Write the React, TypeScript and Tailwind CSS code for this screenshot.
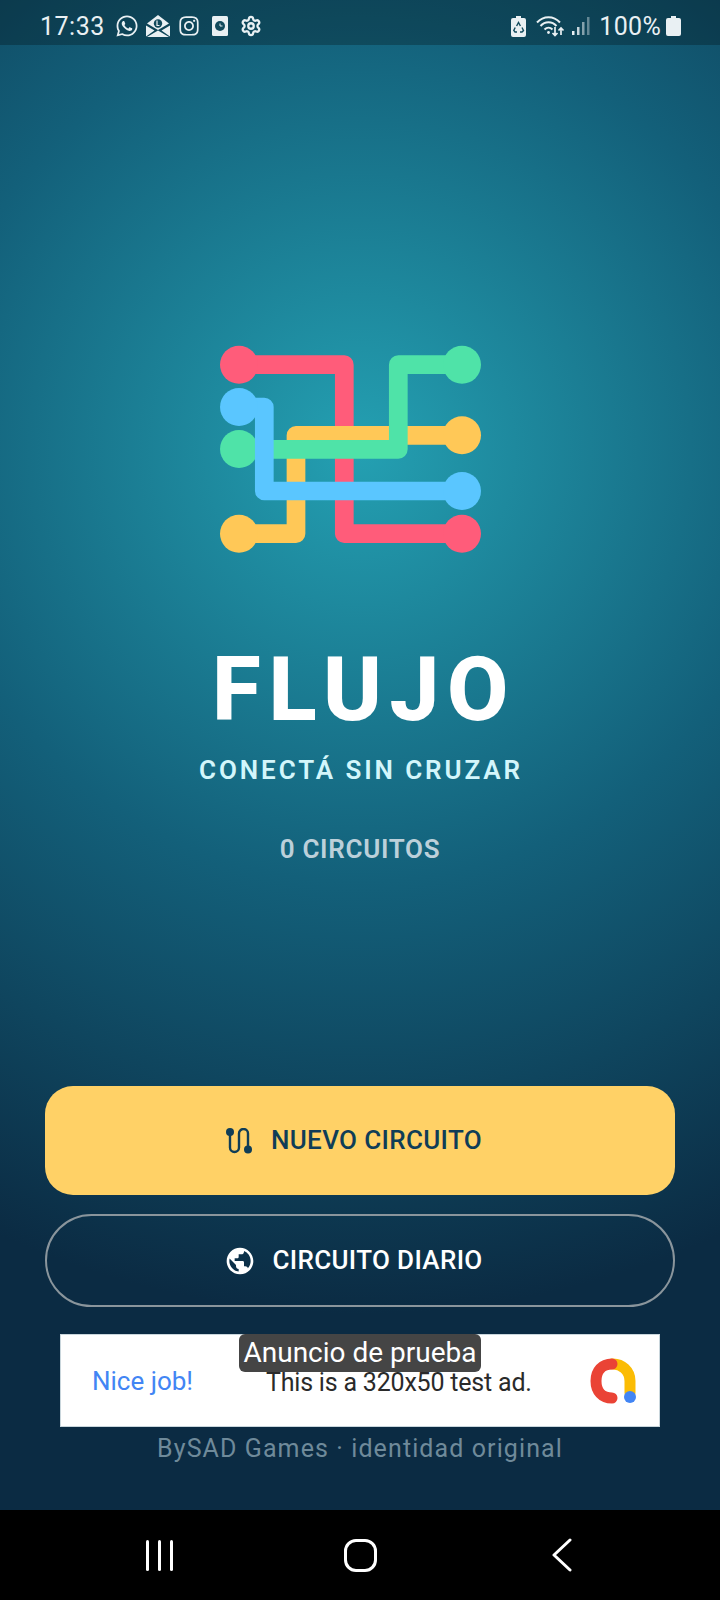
import React from "react";
import { FaWhatsapp, FaInstagram } from "react-icons/fa";
import { MdPublic } from "react-icons/md";
import { Settings } from "lucide-react";

function Logo() {
  return (
    <svg width="300" height="240" viewBox="200 330 300 240" fill="none" strokeWidth="18.7" strokeLinejoin="round" className="block">
      <path d="M239 364.7H344.3V533.7H462" stroke="#ff5c7a" />
      <circle cx="239" cy="364.7" r="19" fill="#ff5c7a" />
      <circle cx="462" cy="533.7" r="19" fill="#ff5c7a" />
      <path d="M239 533.7H296V435.3H462" stroke="#ffc857" />
      <circle cx="239" cy="533.7" r="19" fill="#ffc857" />
      <circle cx="462" cy="435.3" r="19" fill="#ffc857" />
      <path d="M239 449.3H398.3V364.7H462" stroke="#4fe3a8" />
      <circle cx="239" cy="449" r="19" fill="#4fe3a8" />
      <circle cx="462" cy="364.7" r="19" fill="#4fe3a8" />
      <path d="M239 407H264.3V491H462" stroke="#5ac6ff" />
      <circle cx="239" cy="407" r="19" fill="#5ac6ff" />
      <circle cx="462" cy="491" r="19" fill="#5ac6ff" />
    </svg>
  );
}

function StatusBar() {
  return (
    <div className="h-[45px] pt-[7px] bg-black/25 flex items-center justify-between pl-10 pr-[39px] text-[#e9f0f3] text-[25px] leading-none">
      <div className="flex items-center">
        <span className="tracking-[0.5px] w-[75px]">17:33</span>
        <FaWhatsapp size={24} />
        <svg width="24" height="22" viewBox="0 0 24 22" className="ml-[7px]" fill="currentColor">
          <path d="M12 0 23 8.5 12 15 1 8.5Z" />
          <path d="M0 10.5 8.5 15.5 0 21.5ZM24 10.5 15.5 15.5 24 21.5ZM1 22 12 15.5 23 22Z" />
          <circle cx="12" cy="8.5" r="4.2" fill="#114a5c" />
          <path d="M11 5.5V10.5H13.5" stroke="#e9f0f3" strokeWidth="1.2" fill="none" />
        </svg>
        <FaInstagram size={22} className="ml-[8px]" />
        <svg width="16" height="20" viewBox="0 0 16 20" className="ml-[12px]">
          <rect width="16" height="20" rx="1.5" fill="currentColor" />
          <circle cx="8" cy="10" r="5" fill="#114a5c" />
          <path d="M8 7.5V10H10.5" stroke="#e9f0f3" strokeWidth="1" fill="none" />
        </svg>
        <Settings size={22} strokeWidth={2.5} className="ml-[12px]" />
      </div>
      <div className="flex items-center">
        <svg width="15" height="21" viewBox="0 0 15 21" fill="currentColor">
          <path d="M5 0H10V2H13Q15 2 15 4V19Q15 21 13 21H2Q0 21 0 19V4Q0 2 2 2H5Z" />
          <path d="M5.6 10 7.5 6.5 9.4 10M11 11.5 12.5 14.5 11 16H9M6 16H4L2.8 14.5 4.2 11.5" stroke="#114a5c" strokeWidth="1.4" fill="none" />
        </svg>
        <svg width="29" height="22" viewBox="0 0 29 22" className="ml-[10px]" fill="none" stroke="currentColor" strokeWidth="2">
          <path d="M1 7.5C7.5 .5 17.5 .5 24 7.5" />
          <path d="M4.5 11C9 6 16 6 20.5 11" />
          <path d="M8.5 14.5C11 12 14 12 16.5 14.5" />
          <circle cx="12.5" cy="17.5" r="1.4" fill="currentColor" stroke="none" />
          <path d="M19 12V20M16.5 18 19 20.5 21.5 18M25 20V13M22.5 15.5 25 13 27.5 15.5" strokeWidth="1.7" />
        </svg>
        <svg width="18" height="20" viewBox="0 0 18 20" className="ml-[7px]" fill="currentColor">
          <rect x="0" y="15" width="2.5" height="4" />
          <rect x="5" y="11" width="2.5" height="8" opacity=".85" />
          <rect x="10" y="6" width="2.5" height="13" opacity=".55" />
          <rect x="15" y="1" width="2.5" height="18" opacity=".4" />
        </svg>
        <span className="ml-[9px] tracking-[0.3px]">100%</span>
        <svg width="15" height="20" viewBox="0 0 15 20" className="ml-[5px]" fill="currentColor">
          <path d="M5 0H10V2H13Q15 2 15 4V18Q15 20 13 20H2Q0 20 0 18V4Q0 2 2 2H5Z" />
        </svg>
      </div>
    </div>
  );
}

function RouteIcon() {
  return (
    <svg width="26" height="26" viewBox="0 0 26 26" fill="none" stroke="#0f3d57" strokeWidth="2.4">
      <circle cx="4" cy="4" r="4" fill="#0f3d57" stroke="none" />
      <circle cx="22" cy="21.5" r="4" fill="#0f3d57" stroke="none" />
      <path d="M4 5V19.5A4.5 4.5 0 0 0 13 19.5V5.5A4.5 4.5 0 0 1 22 5.5V20" />
    </svg>
  );
}

function AdLogo() {
  return (
    <svg width="46" height="46" viewBox="0 0 46 46" fill="none" strokeWidth="11" strokeLinecap="round">
      <path d="M22 6A17 17 0 0 1 40 23V35" stroke="#fbbc04" />
      <path d="M22 6C12 6 6 13 6 23S12 40 22 40" stroke="#ea4335" />
      <circle cx="40" cy="39" r="6" fill="#4285f4" />
    </svg>
  );
}

function Ad() {
  return (
    <div className="relative mx-[60px] h-[93px] bg-white border border-[#c9d6dc] flex items-center font-['Roboto',sans-serif]">
      <div className="absolute z-10 left-[178px] -top-px w-[242px] h-[38px] bg-[#454545] rounded-[6px] flex items-center justify-center text-white text-[28px] leading-none">
        Anuncio de prueba
      </div>
      <span className="ml-[31px] w-[174px] mt-[1px] text-[#4285f4] text-[26px] leading-none">Nice job!</span>
      <span className="mt-[3px] text-[#2a2a2a] text-[25px] leading-none tracking-[-0.2px]">This is a 320x50 test ad.</span>
      <span className="ml-auto mr-[23px] flex"><AdLogo /></span>
    </div>
  );
}

export default function App() {
  return (
    <div className="w-[720px] h-[1600px] flex flex-col overflow-hidden font-['Roboto',sans-serif] bg-[radial-gradient(circle_864px_at_50%_450px,#24a0b2_0%,#13607a_50%,#0b2b43_100%)]">
      <StatusBar />
      <main className="flex-1 flex flex-col items-center">
        <div className="mt-[285px] mr-[20px]"><Logo /></div>
        <h1 className="mt-[68px] text-white font-extrabold text-[89px] leading-[104px] tracking-[7.6px] pl-[8px]">FLUJO</h1>
        <p className="mt-[13px] pl-[2px] text-[#d3f6fb] font-semibold text-[26px] leading-[30px] tracking-[2.9px]">CONECTÁ SIN CRUZAR</p>
        <p className="mt-[49px] text-[#bcd0da] font-semibold text-[26px] leading-[30px] tracking-[0.7px]">0 CIRCUITOS</p>
        <button className="mt-[222px] w-[630px] h-[109px] pr-[12px] rounded-[28px] bg-[#ffd166] flex items-center justify-center gap-[19px] text-[#0f3d57] font-[480] text-[26px] tracking-[0.35px]">
          <RouteIcon />NUEVO CIRCUITO
        </button>
        <button className="mt-[19px] w-[630px] h-[93px] pr-[13px] rounded-full border-2 border-[#8a959c] flex items-center justify-center gap-[16px] text-white font-[480] text-[26px] tracking-[0.35px]">
          <MdPublic size={32} />CIRCUITO DIARIO
        </button>
        <div className="mt-[27px] w-full"><Ad /></div>
        <p className="mt-[7px] text-[#6f8a9a] text-[25px] leading-[30px] tracking-[1.1px]">BySAD Games · identidad original</p>
      </main>
      <nav className="h-[90px] bg-black flex items-center text-white relative shrink-0">
        <div className="ml-[146px] flex gap-[9px]">
          <span className="w-[3px] h-[31px] bg-white rounded-full" />
          <span className="w-[3px] h-[31px] bg-white rounded-full" />
          <span className="w-[3px] h-[31px] bg-white rounded-full" />
        </div>
        <span className="ml-[171px] w-[33px] h-[33px] rounded-[12px] border-[3px] border-white" />
        <svg width="22" height="34" viewBox="0 0 22 34" className="ml-[174px]" fill="none" stroke="#fff" strokeWidth="3" strokeLinecap="round" strokeLinejoin="round">
          <path d="M19 2 3 17 19 32" />
        </svg>
      </nav>
    </div>
  );
}
